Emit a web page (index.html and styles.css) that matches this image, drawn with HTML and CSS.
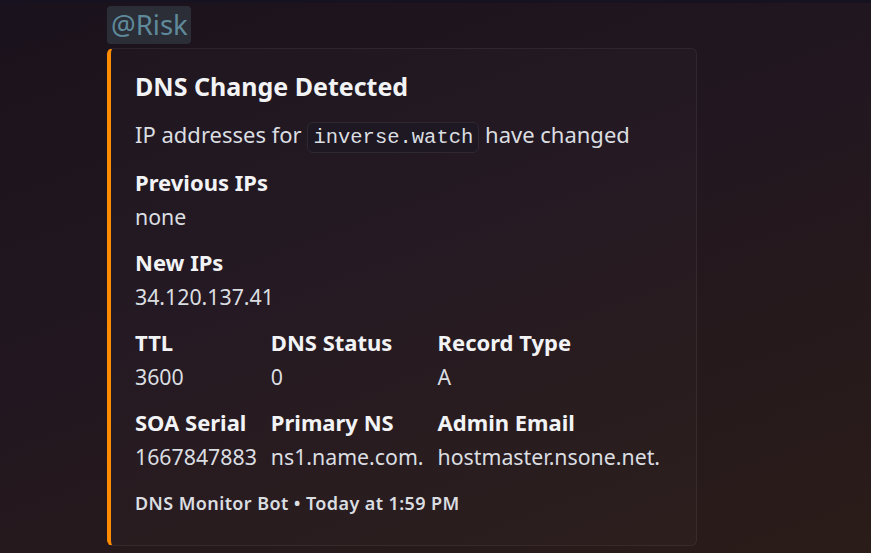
FILE: index.html
```html
<!DOCTYPE html>
<html>
<head>
<meta charset="utf-8">
<link rel="stylesheet" href="styles.css">
</head>
<body>
<div class="topstrip"></div>
<div class="message">
  <span class="mention">@Risk</span>
  <div class="embed">
    <div class="title">DNS Change Detected</div>
    <div class="desc">IP addresses for <code class="code">inverse.watch</code> have changed</div>
    <div class="fields">
      <div class="field full">
        <div class="fname">Previous IPs</div>
        <div class="fvalue">none</div>
      </div>
      <div class="field full">
        <div class="fname">New IPs</div>
        <div class="fvalue">34.120.137.41</div>
      </div>
      <div class="field">
        <div class="fname">TTL</div>
        <div class="fvalue">3600</div>
      </div>
      <div class="field">
        <div class="fname">DNS Status</div>
        <div class="fvalue">0</div>
      </div>
      <div class="field">
        <div class="fname">Record Type</div>
        <div class="fvalue">A</div>
      </div>
      <div class="field">
        <div class="fname">SOA Serial</div>
        <div class="fvalue">1667847883</div>
      </div>
      <div class="field">
        <div class="fname">Primary NS</div>
        <div class="fvalue">ns1.name.com.</div>
      </div>
      <div class="field">
        <div class="fname">Admin Email</div>
        <div class="fvalue">hostmaster.nsone.net.</div>
      </div>
    </div>
    <div class="footer">DNS Monitor Bot • Today at 1:59 PM</div>
  </div>
</div>
</body>
</html>
```
FILE: styles.css
```css
html, body {
  margin: 0;
  padding: 0;
  height: 100%;
}
body {
  background: linear-gradient(160deg, #1a121c 0%, #221720 45%, #2a1c18 100%);
  font-family: "Noto Sans", "Open Sans", sans-serif;
  color: #dbdee1;
  overflow: hidden;
}
.topstrip {
  height: 3px;
  background: #161220;
}
.message {
  padding: 3px 0 0 107px;
}
.mention {
  display: inline-block;
  background: #2b2e37;
  color: #5f8a9b;
  font-size: 27.5px;
  line-height: 38px;
  height: 38px;
  padding: 0 3px 0 4px;
  border-radius: 4px;
}
.embed {
  margin-top: 4px;
  width: 590px;
  box-sizing: border-box;
  height: 498px;
  border: 1px solid rgba(255, 255, 255, 0.06);
  border-left: 4px solid #ff8c00;
  border-radius: 6px;
  background: rgba(255, 255, 255, 0.015);
  padding: 22px 24px 32px 24px;
}
.title {
  font-size: 25px;
  line-height: 30px;
  font-weight: 700;
  color: #f2f3f5;
}
.desc {
  margin-top: 18px;
  font-size: 22px;
  line-height: 30px;
}
.code {
  font-family: "Liberation Mono", "DejaVu Sans Mono", monospace;
  font-size: 20.5px;
  line-height: 20px;
  background: #1e1822;
  border: 1px solid rgba(255, 255, 255, 0.07);
  border-radius: 6px;
  padding: 3px 5px;
  color: #dbdee1;
}
.fields {
  margin-top: 19px;
  display: grid;
  grid-template-columns: repeat(3, auto);
  justify-content: start;
  column-gap: 14px;
  row-gap: 17px;
}
.field.full {
  grid-column: 1 / -1;
}
.fname {
  font-size: 22px;
  line-height: 28px;
  font-weight: 700;
  color: #f2f3f5;
}
.fvalue {
  margin-top: 7px;
  font-size: 21.3px;
  line-height: 28px;
  color: #dbdee1;
}
.footer {
  margin-top: 21px;
  font-size: 18px;
  letter-spacing: 0.4px;
  line-height: 22px;
  font-weight: 600;
  color: #dbdee1;
}
```
